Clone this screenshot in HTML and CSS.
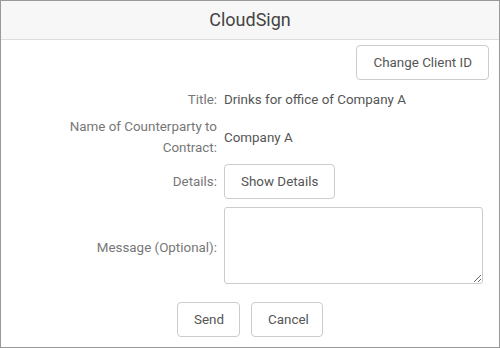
FILE: index.html
```html
<!DOCTYPE html>
<html>
<head>
<meta charset="utf-8">
<link rel="stylesheet" href="styles.css">
</head>
<body>
<div class="dialog">
  <div class="header">CloudSign</div>
  <div class="content">
    <div class="toolbar">
      <button class="btn">Change Client ID</button>
    </div>
    <div class="form">
      <div class="label row-title">Title:</div>
      <div class="value row-title">Drinks for office of Company A</div>
      <div class="label row-name">Name of Counterparty to Contract:</div>
      <div class="value row-name">Company A</div>
      <div class="label">Details:</div>
      <div class="value"><button class="btn">Show Details</button></div>
      <div class="label label-message row-message">Message (Optional):</div>
      <div class="value row-message"><textarea class="message"></textarea></div>
    </div>
    <div class="actions">
      <button class="btn btn-send">Send</button>
      <button class="btn btn-cancel">Cancel</button>
    </div>
  </div>
</div>
</body>
</html>
```
FILE: styles.css
```css
html, body {
  margin: 0;
  padding: 0;
  background: #fff;
}
body {
  font-family: Roboto, "Noto Sans CJK JP", sans-serif;
  font-size: 13.4px;
  color: #555;
}
.dialog {
  width: 500px;
  height: 348px;
  box-sizing: border-box;
  border: 1px solid #999;
  display: flex;
  flex-direction: column;
}
.header {
  height: 38px;
  line-height: 38px;
  background: #f7f7f7;
  border-bottom: 1px solid #ddd;
  text-align: center;
  font-size: 18px;
  color: #444;
}
.content {
  padding: 5px 10px 0 0;
}
.toolbar {
  display: flex;
  justify-content: flex-end;
}
.btn {
  font-family: inherit;
  font-size: 13.4px;
  color: #555;
  background: #fff;
  border: 1px solid #ccc;
  border-radius: 4px;
  height: 35px;
  padding: 0 16px;
  cursor: pointer;
}
.form {
  display: grid;
  grid-template-columns: 160px 1fr;
  column-gap: 7px;
  row-gap: 6px;
  padding-left: 56px;
  padding-right: 6px;
  margin-top: 8px;
}
.label {
  text-align: right;
  color: #777;
  display: flex;
  align-items: center;
  justify-content: flex-end;
  line-height: 21px;
}
.label-message {
  padding-top: 3px;
}
.value {
  display: flex;
  align-items: center;
  line-height: 21px;
}
.row-title {
  min-height: 22px;
}
.row-name {
  min-height: 42px;
}
.row-message {
  margin-top: 2px;
}
.message {
  width: 100%;
  height: 77px;
  box-sizing: border-box;
  border: 1px solid #ccc;
  border-radius: 3px;
  margin: 0;
  font-family: inherit;
  display: block;
}
.actions {
  display: flex;
  justify-content: center;
  gap: 11px;
  margin-top: 18px;
  padding-left: 10px;
}
.btn-send {
  width: 63px;
}
.btn-cancel {
  width: 72px;
}
```
